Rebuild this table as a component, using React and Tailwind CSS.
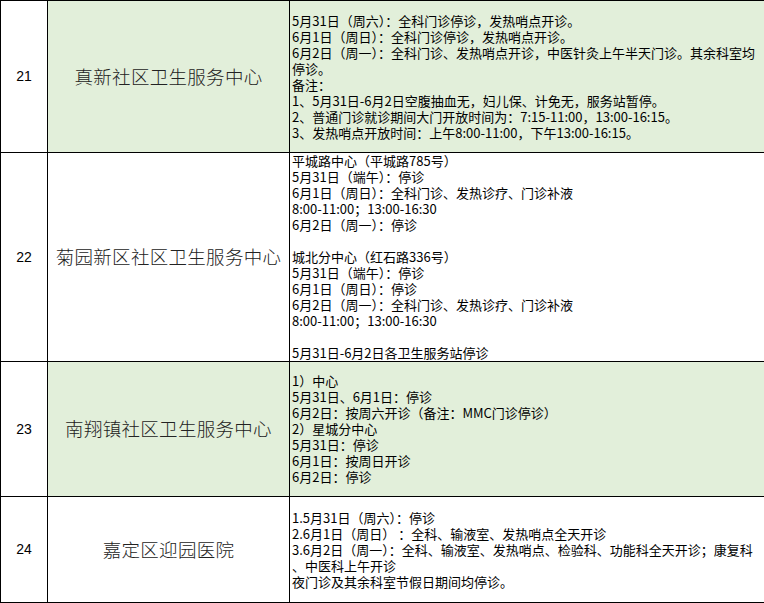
const rows = [
  {
    no: '21',
    name: '真新社区卫生服务中心',
    green: true,
    h: 'h-[152px]',
    lines: [
      '5月31日（周六）：全科门诊停诊，发热哨点开诊。',
      '6月1日（周日）：全科门诊停诊，发热哨点开诊。',
      '6月2日（周一）：全科门诊、发热哨点开诊，中医针灸上午半天门诊。其余科室均',
      '停诊。',
      '备注：',
      '1、5月31日-6月2日空腹抽血无，妇儿保、计免无，服务站暂停。',
      '2、普通门诊就诊期间大门开放时间为：7:15-11:00，13:00-16:15。',
      '3、发热哨点开放时间：上午8:00-11:00，下午13:00-16:15。',
    ],
  },
  {
    no: '22',
    name: '菊园新区社区卫生服务中心',
    green: false,
    h: 'h-[208px]',
    lines: [
      '平城路中心（平城路785号）',
      '5月31日（端午）：停诊',
      '6月1日（周日）：全科门诊、发热诊疗、门诊补液',
      '8:00-11:00；13:00-16:30',
      '6月2日（周一）：停诊',
      '',
      '城北分中心（红石路336号）',
      '5月31日（端午）：停诊',
      '6月1日（周日）：停诊',
      '6月2日（周一）：全科门诊、发热诊疗、门诊补液',
      '8:00-11:00；13:00-16:30',
      '',
      '5月31日-6月2日各卫生服务站停诊',
    ],
  },
  {
    no: '23',
    name: '南翔镇社区卫生服务中心',
    green: true,
    h: 'h-[135px]',
    lines: [
      '1）中心',
      '5月31日、6月1日：停诊',
      '6月2日：按周六开诊（备注：MMC门诊停诊）',
      '2）星城分中心',
      '5月31日：停诊',
      '6月1日：按周日开诊',
      '6月2日：停诊',
    ],
  },
  {
    no: '24',
    name: '嘉定区迎园医院',
    green: false,
    h: 'h-[106px]',
    lines: [
      '1.5月31日（周六）：停诊',
      '2.6月1日（周日） ：全科、输液室、发热哨点全天开诊',
      '3.6月2日（周一）：全科、输液室、发热哨点、检验科、功能科全天开诊；康复科',
      '、中医科上午开诊',
      '夜门诊及其余科室节假日期间均停诊。',
    ],
  },
]

export default function App() {
  return (
    <div className="w-[764px] h-[603px] overflow-hidden bg-white">
      <table className="w-[764px] table-fixed border-collapse text-black" style={{ fontFamily: '"Noto Sans CJK SC", sans-serif' }}>
        <colgroup>
          <col className="w-[47px]" />
          <col className="w-[242px]" />
          <col className="w-[475px]" />
        </colgroup>
        <tbody>
          {rows.map((r) => (
            <tr key={r.no} className={r.h}>
              <td className="border border-black bg-white p-0 text-center align-middle text-[14px] font-['Liberation_Sans',sans-serif]">
                {r.no}
              </td>
              <td
                className={`border border-black p-0 text-center align-middle text-[18.5px] font-light tracking-[0.3px] text-[#222] ${
                  r.green ? 'bg-[#e2efda]' : 'bg-white'
                }`}
              >
                {r.name}
              </td>
              <td
                className={`border border-black py-0 pl-[2px] pr-0 align-middle text-[13px] leading-[16px] ${
                  r.green ? 'bg-[#e2efda]' : 'bg-white'
                }`}
              >
                {r.lines.map((l, i) => (
                  <div key={i} className="min-h-[16px] leading-[16px] whitespace-pre">
                    {l}
                  </div>
                ))}
              </td>
            </tr>
          ))}
        </tbody>
      </table>
    </div>
  )
}
